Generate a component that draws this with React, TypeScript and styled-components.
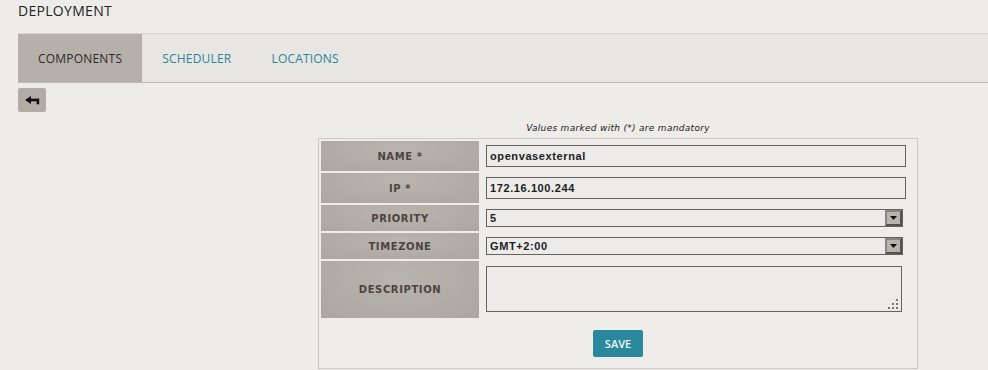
import React from "react";
import styled, { createGlobalStyle } from "styled-components";

const GlobalStyle = createGlobalStyle`
  body {
    margin: 0;
    background: #eeece9;
    font-family: "Open Sans", "Liberation Sans", sans-serif;
    color: #333;
  }
`;

const tabs = ["COMPONENTS", "SCHEDULER", "LOCATIONS"];

const rows = [
  { label: "NAME *", kind: "input", value: "openvasexternal" },
  { label: "IP *", kind: "input", value: "172.16.100.244" },
  { label: "PRIORITY", kind: "select", value: "5" },
  { label: "TIMEZONE", kind: "select", value: "GMT+2:00" },
  { label: "DESCRIPTION", kind: "textarea", value: "" },
];

const BackArrow = () => (
  <svg width="15" height="9" viewBox="0 0 15 9">
    <polygon points="0,4 6,0 6,8" fill="#111" />
    <rect x="5" y="2.7" width="9" height="2.6" fill="#111" />
    <rect x="11.6" y="2.7" width="2.6" height="5.6" fill="#111" />
  </svg>
);

const Grip = () => (
  <svg width="11" height="11" viewBox="0 0 11 11">
    <rect x="8" y="0" width="2" height="2" fill="#7a756f" />
    <rect x="4" y="4" width="2" height="2" fill="#7a756f" />
    <rect x="8" y="4" width="2" height="2" fill="#7a756f" />
    <rect x="0" y="8" width="2" height="2" fill="#7a756f" />
    <rect x="4" y="8" width="2" height="2" fill="#7a756f" />
    <rect x="8" y="8" width="2" height="2" fill="#7a756f" />
  </svg>
);

const App: React.FC = () => {
  return (
    <Page>
      <GlobalStyle />
      <Title>DEPLOYMENT</Title>
      <TabBar>
        {tabs.map((t, i) => (
          <Tab key={t} active={i === 0}>
            {t}
          </Tab>
        ))}
      </TabBar>
      <BackButton aria-label="back">
        <BackArrow />
      </BackButton>

      <FormArea>
        <Note>Values marked with (*) are mandatory</Note>
        <Panel>
          <FormGrid>
            {rows.map((r) => (
              <React.Fragment key={r.label}>
                <LabelCell>{r.label}</LabelCell>
                <FieldCell top={r.kind === "textarea"}>
                  {r.kind === "input" && <TextInput readOnly value={r.value} />}
                  {r.kind === "select" && (
                    <SelectBox>
                      <Select value={r.value} onChange={() => {}}>
                        <option>{r.value}</option>
                      </Select>
                      <ArrowButton>
                        <svg width="7" height="4" viewBox="0 0 7 4">
                          <polygon points="0,0 7,0 3.5,4" fill="#111" />
                        </svg>
                      </ArrowButton>
                    </SelectBox>
                  )}
                  {r.kind === "textarea" && (
                    <AreaBox>
                      <TextArea defaultValue={r.value} />
                      <GripHolder>
                        <Grip />
                      </GripHolder>
                    </AreaBox>
                  )}
                </FieldCell>
              </React.Fragment>
            ))}
          </FormGrid>
          <SaveRow>
            <SaveButton>SAVE</SaveButton>
          </SaveRow>
        </Panel>
      </FormArea>
    </Page>
  );
};

const Page = styled.div`
  padding: 1px 0 0 18px;
`;

const Title = styled.div`
  font-size: 14px;
  line-height: 20px;
  letter-spacing: 0.3px;
  color: #222;
  margin-bottom: 12px;
`;

const TabBar = styled.div`
  display: flex;
  height: 48px;
  background: #e8e6e3;
  border-top: 1px solid #d9d6d2;
  border-bottom: 1px solid #bdb9b4;
`;

const Tab = styled.div<{ active?: boolean }>`
  display: flex;
  align-items: center;
  padding: 0 20px 0 20px;
  font-size: 12px;
  letter-spacing: 0.2px;
  color: ${(p) => (p.active ? "#2e2a28" : "#2a8597")};
  background: ${(p) => (p.active ? "#b6b0ab" : "transparent")};
`;

const BackButton = styled.button`
  display: flex;
  align-items: center;
  justify-content: center;
  width: 28px;
  height: 24px;
  margin-top: 5px;
  padding: 0;
  border: none;
  border-radius: 2px;
  background: #b2aca7;
`;

const FormArea = styled.div`
  width: 600px;
  margin-left: 300px;
  margin-top: 10px;
`;

const Note = styled.div`
  text-align: center;
  font-family: "DejaVu Sans", "Liberation Sans", sans-serif;
  font-style: italic;
  font-size: 9px;
  letter-spacing: 0.3px;
  line-height: 12px;
  color: #1a1a1a;
  margin-bottom: 4px;
`;

const Panel = styled.div`
  border: 1px solid #cdc9c4;
  padding: 2px 2px 11px 2px;
  background: #efedea;
`;

const FormGrid = styled.div`
  display: grid;
  grid-template-columns: 158px 1fr;
  grid-template-rows: 30px 30px 26px 26px 57px;
  gap: 2px;
`;

const LabelCell = styled.div`
  display: flex;
  align-items: center;
  justify-content: center;
  background: radial-gradient(ellipse at 50% 30%, #bab4af 0%, #aca6a1 100%);
  font-family: "DejaVu Sans", "Liberation Sans", sans-serif;
  font-weight: bold;
  font-size: 10px;
  letter-spacing: 0.6px;
  color: #4b4440;
`;

const FieldCell = styled.div<{ top?: boolean }>`
  display: flex;
  align-items: ${(p) => (p.top ? "flex-start" : "center")};
  padding: ${(p) => (p.top ? "5px 0 0 5px" : "0 0 0 5px")};
`;

const TextInput = styled.input`
  box-sizing: border-box;
  width: 420px;
  height: 22px;
  padding: 0 3px;
  border: 1px solid #67625d;
  background: #ecebe9;
  font-family: "Liberation Sans", Arial, sans-serif;
  font-weight: bold;
  font-size: 11px;
  letter-spacing: 0.6px;
  color: #1d1d1d;
  outline: none;
`;

const SelectBox = styled.div`
  box-sizing: border-box;
  display: flex;
  align-items: center;
  width: 417px;
  height: 18px;
  border: 1px solid #67625d;
  background: #ecebe9;
`;

const Select = styled.select`
  flex: 1;
  appearance: none;
  height: 100%;
  border: none;
  padding: 0 3px;
  background: transparent;
  font-family: "Liberation Sans", Arial, sans-serif;
  font-weight: bold;
  font-size: 11px;
  letter-spacing: 0.6px;
  color: #1d1d1d;
  outline: none;
`;

const ArrowButton = styled.span`
  box-sizing: border-box;
  display: flex;
  align-items: center;
  justify-content: center;
  width: 17px;
  height: 16px;
  border: 2px solid #55514d;
  border-top-color: #8a857f;
  border-left-color: #8a857f;
  background: #b9b3ae;
`;

const AreaBox = styled.div`
  box-sizing: border-box;
  display: flex;
  width: 416px;
  height: 46px;
  border: 1px solid #67625d;
  background: #ecebe9;
`;

const TextArea = styled.textarea`
  flex: 1;
  border: none;
  resize: none;
  background: transparent;
  outline: none;
`;

const GripHolder = styled.div`
  align-self: flex-end;
  display: flex;
  padding: 0 2px 1px 0;
`;

const SaveRow = styled.div`
  display: flex;
  justify-content: center;
  margin-top: 12px;
`;

const SaveButton = styled.button`
  width: 50px;
  height: 27px;
  border: none;
  border-radius: 2px;
  background: #2a889c;
  color: #f2f6f7;
  font-family: "Open Sans", "Liberation Sans", sans-serif;
  font-size: 11px;
  font-weight: 600;
  padding: 0;
`;

export default App;
